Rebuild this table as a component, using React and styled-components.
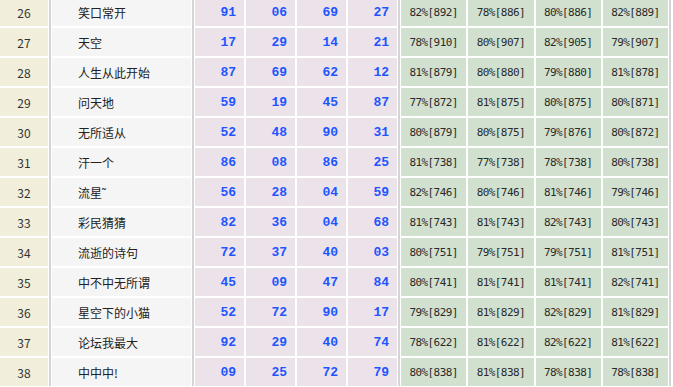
import React from "react";
import styled, { createGlobalStyle } from "styled-components";

const Global = createGlobalStyle`
  html, body { margin: 0; padding: 0; background: #ffffff; overflow: hidden; }
  body { font-family: "Noto Sans CJK SC", "Liberation Sans", sans-serif; }
`;

const rows = [
  [26, "笑口常开", ["91", "06", "69", "27"], ["82%[892]", "78%[886]", "80%[886]", "82%[889]"]],
  [27, "天空", ["17", "29", "14", "21"], ["78%[910]", "80%[907]", "82%[905]", "79%[907]"]],
  [28, "人生从此开始", ["87", "69", "62", "12"], ["81%[879]", "80%[880]", "79%[880]", "81%[878]"]],
  [29, "问天地", ["59", "19", "45", "87"], ["77%[872]", "81%[875]", "80%[875]", "80%[871]"]],
  [30, "无所适从", ["52", "48", "90", "31"], ["80%[879]", "80%[875]", "79%[876]", "80%[872]"]],
  [31, "汗一个", ["86", "08", "86", "25"], ["81%[738]", "77%[738]", "78%[738]", "80%[738]"]],
  [32, "流星˜", ["56", "28", "04", "59"], ["82%[746]", "80%[746]", "81%[746]", "79%[746]"]],
  [33, "彩民猜猜", ["82", "36", "04", "68"], ["81%[743]", "81%[743]", "82%[743]", "80%[743]"]],
  [34, "流逝的诗句", ["72", "37", "40", "03"], ["80%[751]", "79%[751]", "79%[751]", "81%[751]"]],
  [35, "中不中无所谓", ["45", "09", "47", "84"], ["80%[741]", "81%[741]", "81%[741]", "82%[741]"]],
  [36, "星空下的小猫", ["52", "72", "90", "17"], ["79%[829]", "81%[829]", "82%[829]", "81%[829]"]],
  [37, "论坛我最大", ["92", "29", "40", "74"], ["78%[622]", "81%[622]", "82%[622]", "81%[622]"]],
  [38, "中中中!", ["09", "25", "72", "79"], ["80%[838]", "81%[838]", "78%[838]", "78%[838]"]],
];

const Table = styled.div`
  display: flex;
  width: 673px;
  margin-top: -2px;
  background: #ffffff;
`;

const Group = styled.div`
  display: grid;
  grid-template-columns: ${(p) => p.$cols};
  grid-auto-rows: 28px;
  gap: 2px;
  flex: ${(p) => (p.$grow ? "1 1 0" : "0 0 auto")};
`;

const Separator = styled.div`
  width: 2px;
  margin: 0 1px;
  background: #d4d4d4;
  flex: 0 0 auto;
`;

const NoCell = styled.div`
  background: #f1efdb;
  color: #333333;
  font-family: "Noto Sans CJK SC", sans-serif;
  font-size: 12px;
  display: flex;
  align-items: center;
  justify-content: center;
`;

const NameCell = styled.div`
  background: #f5f5f5;
  color: #222222;
  font-size: 12px;
  display: flex;
  align-items: center;
  padding-left: 26px;
  white-space: nowrap;
`;

const NumCell = styled.div`
  background: #ebe2ea;
  color: #1f55ff;
  font-family: "Liberation Mono", monospace;
  font-weight: bold;
  font-size: 13px;
  display: flex;
  align-items: center;
  justify-content: flex-end;
  padding-right: 8px;
`;

const RateCell = styled.div`
  background: #d2e1cf;
  color: #2a2a2a;
  font-family: "DejaVu Sans Mono", monospace;
  font-size: 11px;
  letter-spacing: -0.6px;
  display: flex;
  align-items: center;
  justify-content: center;
  white-space: nowrap;
`;

export default function App() {
  return (
    <>
      <Global />
      <Table>
        <Group $cols="48px">
          {rows.map((r) => (
            <NoCell key={r[0]}>{r[0]}</NoCell>
          ))}
        </Group>
        <Separator />
        <Group $cols="139px">
          {rows.map((r) => (
            <NameCell key={r[0]}>{r[1]}</NameCell>
          ))}
        </Group>
        <Separator />
        <Group $cols="repeat(4, 49px)">
          {rows.map((r) =>
            r[2].map((n, i) => <NumCell key={`${r[0]}-${i}`}>{n}</NumCell>)
          )}
        </Group>
        <Separator />
        <Group $cols="repeat(4, 1fr)" $grow>
          {rows.map((r) =>
            r[3].map((t, i) => <RateCell key={`${r[0]}-${i}`}>{t}</RateCell>)
          )}
        </Group>
        <Separator />
        <div style={{ width: 1 }} />
      </Table>
    </>
  );
}
